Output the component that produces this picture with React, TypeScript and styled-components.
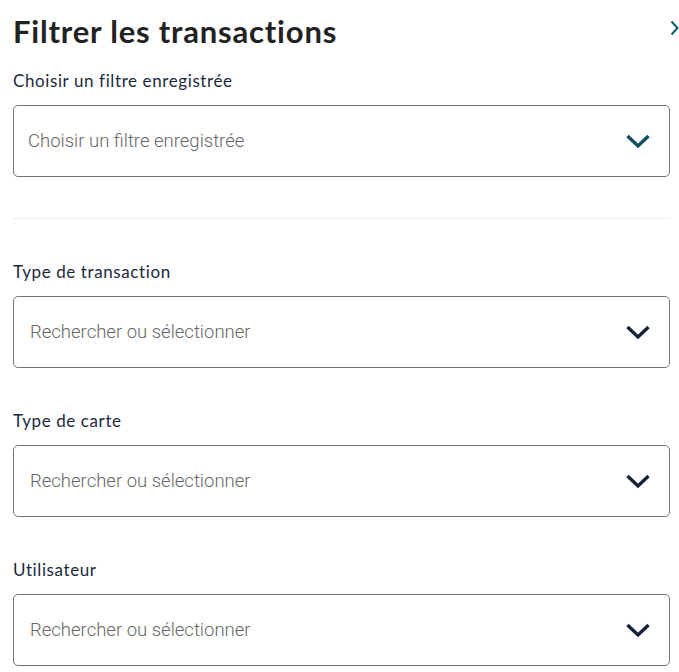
import styled, { createGlobalStyle } from 'styled-components';

const GlobalStyle = createGlobalStyle`
  body {
    margin: 0;
    background: #fff;
    font-family: Lato, 'Noto Sans', Arial, sans-serif;
  }
`;

const Panel = styled.div`
  padding: 12px 0 0 13px;
  width: 679px;
  box-sizing: border-box;
`;

const Header = styled.div`
  display: flex;
  align-items: center;
  justify-content: space-between;
  height: 38px;
`;

const Title = styled.h1`
  margin: 0;
  font-family: Lato, sans-serif;
  font-size: 31px;
  font-weight: 700;
  letter-spacing: 0.8px;
  color: #222;
`;

const CloseButton = styled.button`
  border: none;
  background: none;
  padding: 0;
  margin-bottom: 6px;
  display: flex;
  color: #0b5870;
  cursor: pointer;
`;

const Field = styled.div<{ $first?: boolean }>`
  width: 657px;
  margin-top: ${(p) => (p.$first ? 20 : 0)}px;
  margin-bottom: ${(p) => (p.$first ? 0 : 42)}px;

  &:last-child {
    margin-bottom: 0;
  }
`;

const Label = styled.div`
  font-family: Lato, sans-serif;
  font-size: 17px;
  letter-spacing: 0.6px;
  color: #1b2940;
  line-height: 22px;
  margin-bottom: 13px;
`;

const SelectBox = styled.div`
  height: 72px;
  box-sizing: border-box;
  border: 1px solid #757575;
  border-radius: 5px;
  display: flex;
  align-items: center;
  justify-content: space-between;
  padding: 0 18px 0 14px;
`;

const Placeholder = styled.span<{ $inset?: number }>`
  font-family: Roboto, sans-serif;
  font-size: 18.5px;
  font-weight: 300;
  color: #666;
  padding-left: ${(p) => p.$inset ?? 0}px;
`;

const Divider = styled.hr`
  width: 657px;
  margin: 41px 0 42px 0;
  border: none;
  border-top: 1px solid #ececec;
`;

const ChevronDown = ({ color }: { color: string }) => (
  <svg width="26" height="16" viewBox="0 0 26 16">
    <path d="M2.5 3 L13 13 L23.5 3" fill="none" stroke={color} strokeWidth="3.4" />
  </svg>
);

const ChevronRight = () => (
  <svg width="9" height="16" viewBox="0 0 9 16">
    <path d="M1.5 1.5 L7.5 8 L1.5 14.5" fill="none" stroke="currentColor" strokeWidth="2" />
  </svg>
);

const fields = [
  { label: 'Type de transaction' },
  { label: 'Type de carte' },
  { label: 'Utilisateur' },
];

export default function App() {
  return (
    <>
      <GlobalStyle />
      <Panel>
        <Header>
          <Title>Filtrer les transactions</Title>
          <CloseButton>
            <ChevronRight />
          </CloseButton>
        </Header>
        <Field $first>
          <Label>Choisir un filtre enregistrée</Label>
          <SelectBox>
            <Placeholder>Choisir un filtre enregistrée</Placeholder>
            <ChevronDown color="#0d4d62" />
          </SelectBox>
        </Field>
        <Divider />
        {fields.map((f) => (
          <Field key={f.label}>
            <Label>{f.label}</Label>
            <SelectBox>
              <Placeholder $inset={2}>Rechercher ou sélectionner</Placeholder>
              <ChevronDown color="#14233a" />
            </SelectBox>
          </Field>
        ))}
      </Panel>
    </>
  );
}
